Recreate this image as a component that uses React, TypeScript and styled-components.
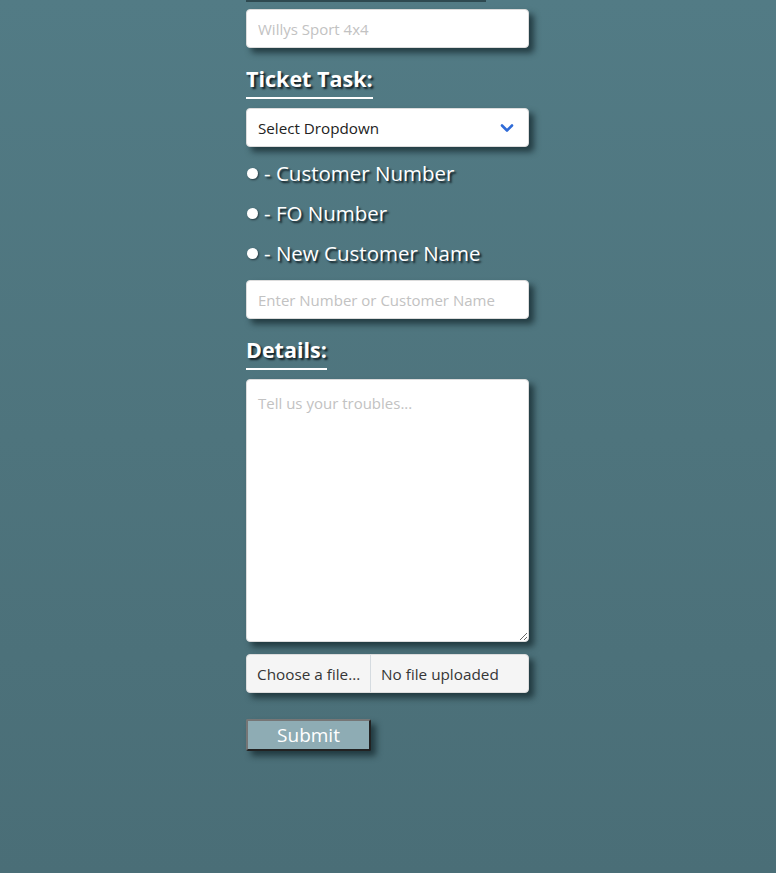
import React from 'react';
import styled, { createGlobalStyle } from 'styled-components';

const GlobalStyle = createGlobalStyle`
  html, body {
    margin: 0;
    padding: 0;
    height: 100%;
  }
  body {
    background: linear-gradient(180deg, #527b85 0%, #4e747d 50%, #4a6e77 100%);
    font-family: 'Open Sans', 'Noto Sans', sans-serif;
  }
`;

const Page = styled.div`
  min-height: 873px;
  display: flex;
  justify-content: flex-start;
  padding-left: 246px;
  box-sizing: border-box;
`;

const Form = styled.form`
  width: 283px;
  display: flex;
  flex-flow: column;
  align-items: stretch;
`;

const TopEdge = styled.div`
  width: 240px;
  height: 2px;
  background: #2e4950;
  margin-bottom: 7px;
`;

const Input = styled.input`
  height: 39px;
  box-sizing: border-box;
  border: 1px solid #dcdcdc;
  border-radius: 4px;
  padding: 0 11px;
  font-family: inherit;
  font-size: 15px;
  color: #333;
  background: #fff;
  box-shadow: 5px 5px 6px rgba(20, 40, 45, 0.75);
  outline: none;
  &::placeholder {
    color: #c2c2c2;
  }
`;

const Heading = styled.h2`
  align-self: flex-start;
  margin: 17px 0 9px;
  padding-bottom: 4px;
  font-size: 21.5px;
  font-weight: 700;
  line-height: 28px;
  color: #fff;
  border-bottom: 2px solid #fff;
  text-shadow: 2px 2px 2px rgba(10, 20, 25, 0.9);
`;

const SelectBox = styled.div`
  height: 39px;
  box-sizing: border-box;
  border: 1px solid #dcdcdc;
  border-radius: 4px;
  padding: 0 14px 0 11px;
  background: #fff;
  box-shadow: 5px 5px 6px rgba(20, 40, 45, 0.75);
  display: flex;
  align-items: center;
  justify-content: space-between;
  font-size: 15.2px;
  color: #222;
`;

const Options = styled.ul`
  list-style: none;
  margin: 12px 0 13px;
  padding: 0;
  display: flex;
  flex-flow: column;
  gap: 12px;
`;

const Option = styled.li`
  display: flex;
  align-items: center;
  gap: 6px;
  height: 28px;
  font-size: 20.5px;
  color: #fff;
  text-shadow: 2px 2px 2px rgba(10, 20, 25, 0.9);
`;

const Dot = styled.span`
  width: 11px;
  height: 11px;
  border-radius: 50%;
  background: #fff;
  margin-left: 1px;
  box-shadow: 1px 1px 2px rgba(10, 20, 25, 0.6);
`;

const TextArea = styled.textarea`
  height: 263px;
  box-sizing: border-box;
  border: 1px solid #dcdcdc;
  border-radius: 4px;
  padding: 13px 11px;
  font-family: inherit;
  font-size: 15px;
  background: #fff;
  box-shadow: 5px 5px 6px rgba(20, 40, 45, 0.75);
  resize: vertical;
  outline: none;
  &::placeholder {
    color: #c2c2c2;
  }
`;

const FileRow = styled.label`
  margin-top: 12px;
  height: 39px;
  box-sizing: border-box;
  display: flex;
  border: 1px solid #dcdcdc;
  border-radius: 4px;
  background: #f5f5f5;
  box-shadow: 5px 5px 6px rgba(20, 40, 45, 0.75);
  overflow: hidden;
  font-size: 15.3px;
  color: #363636;
  white-space: nowrap;
`;

const FilePart = styled.span<{ $grow?: boolean }>`
  display: flex;
  align-items: center;
  padding: 0 10px;
  box-sizing: border-box;
  flex: ${(p) => (p.$grow ? 1 : '0 0 auto')};
  width: ${(p) => (p.$grow ? 'auto' : '124px')};
  border-right: ${(p) => (p.$grow ? 'none' : '1px solid #d5dbe0')};
`;

const Submit = styled.button`
  align-self: flex-start;
  margin-top: 26px;
  width: 125px;
  height: 32px;
  background: #8eacb4;
  color: #fff;
  font-family: inherit;
  font-size: 19px;
  border-style: solid;
  border-width: 2px;
  border-color: #767676 #222 #222 #767676;
  border-radius: 2px;
  box-shadow: 5px 5px 6px rgba(20, 40, 45, 0.75);
  padding: 0;
`;

const Chevron = () => (
  <svg width="14" height="10" viewBox="0 0 14 10">
    <path d="M2 2.5 L7 7.5 L12 2.5" fill="none" stroke="#2f6bd8" strokeWidth="2.6" strokeLinecap="round" strokeLinejoin="round" />
  </svg>
);

const App = () => {
  return (
    <Page>
      <GlobalStyle />
      <Form onSubmit={(e) => e.preventDefault()}>
        <TopEdge />
        <Input placeholder="Willys Sport 4x4" />
        <Heading>Ticket Task:</Heading>
        <SelectBox>
          <span>Select Dropdown</span>
          <Chevron />
        </SelectBox>
        <Options>
          <Option><Dot /> - Customer Number</Option>
          <Option><Dot /> - FO Number</Option>
          <Option><Dot /> - New Customer Name</Option>
        </Options>
        <Input placeholder="Enter Number or Customer Name" />
        <Heading>Details:</Heading>
        <TextArea placeholder="Tell us your troubles..." />
        <FileRow>
          <FilePart>Choose a file...</FilePart>
          <FilePart $grow>No file uploaded</FilePart>
        </FileRow>
        <Submit type="submit">Submit</Submit>
      </Form>
    </Page>
  );
};

export default App;
